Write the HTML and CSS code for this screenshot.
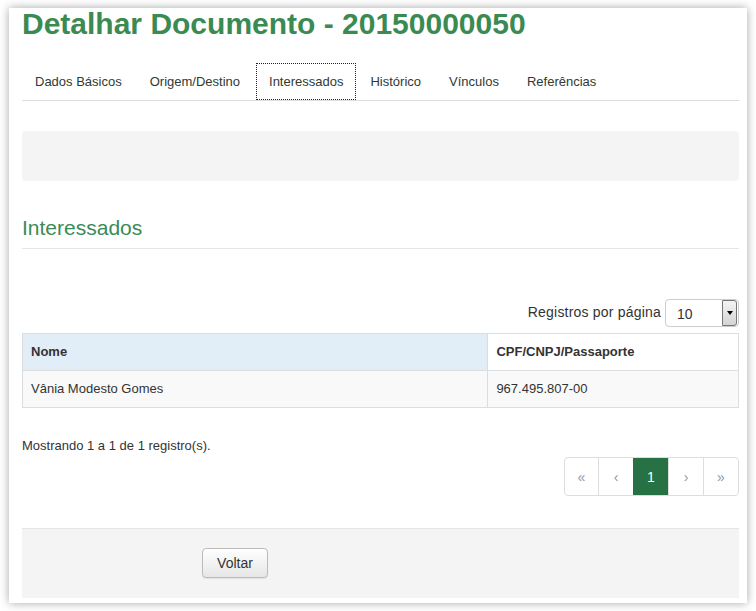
FILE: index.html
```html
<!DOCTYPE html>
<html lang="pt-BR">
<head>
<meta charset="utf-8">
<title>Detalhar Documento</title>
<link rel="stylesheet" href="styles.css">
</head>
<body>
<div class="panel">
  <h1 class="title">Detalhar Documento - 20150000050</h1>
  <ul class="tabs">
    <li class="tab">Dados Básicos</li>
    <li class="tab">Origem/Destino</li>
    <li class="tab tab-focus">Interessados</li>
    <li class="tab">Histórico</li>
    <li class="tab">Vínculos</li>
    <li class="tab">Referências</li>
  </ul>
  <div class="well"></div>
  <h2 class="section-title">Interessados</h2>
  <div class="page-size">
    <span class="page-size-label">Registros por página</span>
    <div class="select">
      <span class="select-value">10</span>
      <span class="select-btn"><span class="caret"></span></span>
    </div>
  </div>
  <table class="grid">
    <thead>
      <tr><th class="col-name sorted">Nome</th><th class="col-doc">CPF/CNPJ/Passaporte</th></tr>
    </thead>
    <tbody>
      <tr><td>Vânia Modesto Gomes</td><td>967.495.807-00</td></tr>
    </tbody>
  </table>
  <p class="info">Mostrando 1 a 1 de 1 registro(s).</p>
  <div class="pager-row">
    <ul class="pagination">
      <li class="page">«</li>
      <li class="page">‹</li>
      <li class="page active">1</li>
      <li class="page">›</li>
      <li class="page">»</li>
    </ul>
  </div>
  <div class="footer">
    <button class="btn" type="button">Voltar</button>
  </div>
</div>
</body>
</html>
```
FILE: styles.css
```css
html, body {
  margin: 0;
  padding: 0;
  background: #ffffff;
}
body {
  font-family: "Liberation Sans", Arial, sans-serif;
  color: #333333;
  padding: 8px 9px 8px 9px;
}
.panel {
  height: 595px;
  box-sizing: border-box;
  width: 738px;
  padding: 0 8px 5px 13px;
  background: #ffffff;
  box-shadow: 0 0 9px rgba(0, 0, 0, 0.35);
  display: flex;
  flex-direction: column;
}
.title {
  margin: 1px 0 0 0;
  font-size: 30px;
  line-height: 30px;
  font-weight: bold;
  color: #3a8a52;
}
.tabs {
  list-style: none;
  margin: 24px 0 0 0;
  padding: 0;
  display: flex;
  border-bottom: 1px solid #dddddd;
}
.tab {
  font-size: 13px;
  line-height: 16px;
  padding: 10px 12px 9px 12px;
  border: 1px solid transparent;
  margin-right: 2px;
  color: #2f3a33;
}
.tab-focus {
  border: 1px dotted #222222;
  margin-left: 1px;
  margin-right: 1px;
}
.well {
  margin-top: 30px;
  height: 50px;
  background: #f4f4f4;
  border-radius: 4px;
}
.section-title {
  margin: 35px 0 0 0;
  font-size: 21px;
  line-height: 23px;
  font-weight: normal;
  color: #3c8a57;
  padding-bottom: 9px;
  border-bottom: 1px solid #e5e5e5;
}
.page-size {
  margin-top: 50px;
  display: flex;
  justify-content: flex-end;
  align-items: center;
  gap: 4px;
}
.page-size-label {
  font-size: 14px;
  letter-spacing: 0.2px;
  color: #333333;
  margin-top: -2px;
}
.select {
  width: 74px;
  height: 28px;
  box-sizing: border-box;
  border: 1px solid #cccccc;
  border-radius: 4px;
  display: flex;
  align-items: center;
  justify-content: space-between;
  padding-left: 11px;
  padding-right: 1px;
}
.select-value {
  font-size: 14px;
  color: #333333;
  margin-top: 2px;
}
.select-btn {
  width: 15px;
  height: 26px;
  box-sizing: border-box;
  border: 1px solid #777777;
  border-radius: 0 3px 3px 0;
  background: linear-gradient(#f4f4f4, #d4d4d4);
  display: flex;
  align-items: center;
  justify-content: center;
}
.caret {
  width: 0;
  height: 0;
  border-left: 3px solid transparent;
  border-right: 3px solid transparent;
  border-top: 4px solid #000000;
}
.grid {
  margin-top: 6px;
  width: 100%;
  border-collapse: collapse;
  font-size: 13px;
}
.grid th, .grid td {
  border: 1px solid #dddddd;
  padding: 8px 8px;
  line-height: 20px;
  text-align: left;
}
.grid th {
  font-weight: bold;
  background: #ffffff;
}
.grid th.sorted {
  background: #e1edf7;
}
.col-name {
  width: 65%;
}
.grid tbody tr {
  background: #f9f9f9;
}
.info {
  margin: 31px 0 0 0;
  font-size: 13px;
  line-height: 14px;
  color: #333333;
}
.pager-row {
  display: flex;
  justify-content: flex-end;
  margin-top: 4px;
}
.pagination {
  list-style: none;
  margin: 0;
  padding: 0;
  display: flex;
  border: 1px solid #dddddd;
  border-radius: 4px;
  overflow: hidden;
}
.page {
  width: 34px;
  height: 37px;
  display: flex;
  align-items: center;
  justify-content: center;
  font-size: 14px;
  color: #8a9aa6;
  border-left: 1px solid #dddddd;
}
.page:first-child {
  border-left: none;
  width: 33px;
}
.page.active {
  background: #277245;
  color: #ffffff;
  border-left-color: #277245;
}
.footer {
  margin-top: auto;
  height: 70px;
  box-sizing: border-box;
  background: #f4f4f4;
  border-top: 1px solid #e5e5e5;
  padding: 19px 0 0 180px;
}
.btn {
  width: 66px;
  height: 30px;
  font-family: "Liberation Sans", Arial, sans-serif;
  font-size: 14px;
  color: #333333;
  background: linear-gradient(#ffffff, #e6e6e6);
  border: 1px solid #bbbbbb;
  border-radius: 4px;
  box-shadow: 0 1px 1px rgba(0,0,0,0.075);
  padding: 0;
}
```
